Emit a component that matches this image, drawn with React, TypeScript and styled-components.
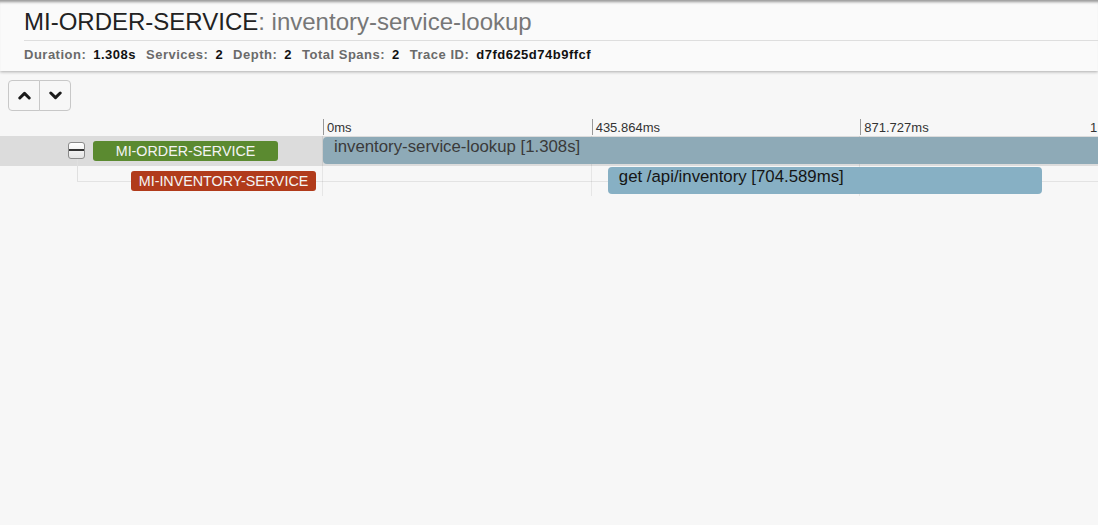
import React from "react";
import styled, { createGlobalStyle } from "styled-components";

const GlobalStyle = createGlobalStyle`
  html, body { margin: 0; padding: 0; overflow: hidden; background: #f7f7f7; }
  body { font-family: "Liberation Sans", Arial, sans-serif; color: #333; }
`;

const TOTAL = 1308;
const LABEL_W = 322;
const TL_W = 806;

const Page = styled.div`
  width: 1098px;
  height: 525px;
  overflow: hidden;
  background: #f7f7f7;
`;

const Header = styled.header`
  position: relative;
  z-index: 1;
  height: 71px;
  background: #fafafa;
  box-shadow: inset 0 4px 3px -2px rgba(0, 0, 0, 0.4), 0 1px 3px rgba(0, 0, 0, 0.3);
`;

const TitleLine = styled.h1`
  margin: 0 0 0 24px;
  padding: 7px 0 2px;
  height: 31px;
  font-size: 24px;
  line-height: 30px;
  font-weight: normal;
  color: #222;
  border-bottom: 1px solid #dedede;
  white-space: nowrap;
`;

const SpanName = styled.span`
  color: #777;
`;

const Stats = styled.div`
  display: flex;
  gap: 10px;
  margin-left: 24px;
  height: 30px;
  line-height: 28px;
  font-size: 13px;
  letter-spacing: 0.5px;
  font-weight: bold;
  white-space: nowrap;
`;

const Stat = styled.span`
  display: flex;
  gap: 7px;
  color: #6a6a6a;
`;

const StatValue = styled.span`
  color: #111;
`;

const Toolbar = styled.div`
  display: flex;
  padding: 9px 0 0 8px;
  height: 31px;
`;

const NavButton = styled.button`
  width: 32px;
  height: 31px;
  display: flex;
  align-items: center;
  justify-content: center;
  background: #f7f7f7;
  border: 1px solid #c8c8c8;
  color: #1a1a1a;
  padding: 0;
  &:first-child { border-radius: 4px 0 0 4px; }
  &:last-child { border-radius: 0 4px 4px 0; margin-left: -1px; }
`;

const Chevron = ({ down }: { down?: boolean }) => (
  <svg width="13" height="9" viewBox="0 0 13 9" aria-hidden="true">
    <polyline
      points={down ? "1.8,2 6.5,6.6 11.2,2" : "1.8,7 6.5,2.4 11.2,7"}
      fill="none"
      stroke="currentColor"
      strokeWidth="3"
      strokeLinecap="round"
      strokeLinejoin="round"
    />
  </svg>
);

const Ticks = styled.div`
  display: flex;
  margin: 8px 0 0 ${LABEL_W + 1}px;
  width: ${TL_W}px;
  height: 16px;
`;

const Tick = styled.div`
  flex: 0 0 33.3333%;
  box-sizing: border-box;
  border-left: 1px solid #999;
  padding-left: 3px;
  font-size: 13px;
  line-height: 18px;
  color: #333;
`;

const EndTick = styled.div`
  flex: 0 0 60px;
  margin-left: -60px;
  text-align: right;
  font-size: 13px;
  line-height: 18px;
  color: #333;
`;

const Rows = styled.div`
  width: ${LABEL_W + TL_W}px;
  margin-top: 1px;
`;

const Row = styled.div<{ $selected?: boolean; $child?: boolean }>`
  position: relative;
  display: grid;
  grid-template-columns: ${LABEL_W}px ${TL_W}px;
  height: 30px;
  background: ${(p) =>
    p.$selected
      ? "#dcdcdc"
      : p.$child
      ? "linear-gradient(#e3e3e3, #e3e3e3) 77px 15px / 100% 1px no-repeat"
      : "transparent"};
  ${(p) =>
    p.$child &&
    `&::before {
      content: "";
      position: absolute;
      left: 77px;
      top: -7px;
      height: 22px;
      border-left: 1px solid #e0e0e0;
    }`}
`;

const LabelCell = styled.div<{ $depth: number }>`
  display: flex;
  align-items: center;
  gap: 8px;
  padding-left: ${(p) => 30 + p.$depth * 38}px;
`;

const Toggle = styled.span<{ $hidden?: boolean }>`
  position: relative;
  flex: 0 0 17px;
  height: 17px;
  box-sizing: border-box;
  border: 1px solid #8a8a8a;
  border-radius: 3px;
  background: linear-gradient(#ffffff, #e4e4e4);
  visibility: ${(p) => (p.$hidden ? "hidden" : "visible")};
  margin-top: -1px;
  &::after {
    content: "";
    position: absolute;
    left: 0;
    right: 0;
    top: 6px;
    height: 2px;
    background: #333;
  }
`;

const Badge = styled.span<{ $color: string }>`
  width: 185px;
  height: 20px;
  border-radius: 3px;
  background: ${(p) => p.$color};
  color: #f4f4f4;
  font-size: 14.3px;
  line-height: 20px;
  text-align: center;
  white-space: nowrap;
`;

const TimelineCell = styled.div`
  display: flex;
  align-items: flex-start;
  background: repeating-linear-gradient(
    to right,
    rgba(0, 0, 0, 0.07) 0 1px,
    transparent 1px 268.667px
  );
`;

const Bar = styled.div<{ $color: string; $text: string }>`
  box-sizing: border-box;
  height: 27px;
  margin-top: 1px;
  border-radius: 4px;
  background: ${(p) => p.$color};
  color: ${(p) => p.$text};
  font-size: 16.8px;
  line-height: 20px;
  padding-left: 11px;
  white-space: nowrap;
  overflow: hidden;
`;

type SpanRow = {
  service: string;
  color: string;
  name: string;
  durLabel: string;
  start: number;
  dur: number;
  depth: number;
  hasChildren: boolean;
  selected: boolean;
  barColor: string;
  textColor: string;
};

const spans: SpanRow[] = [
  {
    service: "MI-ORDER-SERVICE",
    color: "#5b8a30",
    name: "inventory-service-lookup",
    durLabel: "1.308s",
    start: 0,
    dur: 1308,
    depth: 1,
    hasChildren: true,
    selected: true,
    barColor: "#8eaab7",
    textColor: "#3a3a3a",
  },
  {
    service: "MI-INVENTORY-SERVICE",
    color: "#b13b1b",
    name: "get /api/inventory",
    durLabel: "704.589ms",
    start: 462.3,
    dur: 704.589,
    depth: 2,
    hasChildren: false,
    selected: false,
    barColor: "#87b0c4",
    textColor: "#151515",
  },
];

const stats: [string, string][] = [
  ["Duration:", "1.308s"],
  ["Services:", "2"],
  ["Depth:", "2"],
  ["Total Spans:", "2"],
  ["Trace ID:", "d7fd625d74b9ffcf"],
];

export default function App() {
  return (
    <Page>
      <GlobalStyle />
      <Header>
        <TitleLine>
          MI-ORDER-SERVICE<SpanName>: inventory-service-lookup</SpanName>
        </TitleLine>
        <Stats>
          {stats.map(([k, v]) => (
            <Stat key={k}>
              <span>{k}</span>
              <StatValue>{v}</StatValue>
            </Stat>
          ))}
        </Stats>
      </Header>
      <Toolbar>
        <NavButton aria-label="previous">
          <Chevron />
        </NavButton>
        <NavButton aria-label="next">
          <Chevron down />
        </NavButton>
      </Toolbar>
      <Ticks>
        <Tick>0ms</Tick>
        <Tick>435.864ms</Tick>
        <Tick>871.727ms</Tick>
        <EndTick>1.308s</EndTick>
      </Ticks>
      <Rows>
        {spans.map((s) => (
          <Row key={s.name} $selected={s.selected} $child={s.depth > 1}>
            <LabelCell $depth={s.depth}>
              <Toggle $hidden={!s.hasChildren} />
              <Badge $color={s.color}>{s.service}</Badge>
            </LabelCell>
            <TimelineCell>
              <Bar
                $color={s.barColor}
                $text={s.textColor}
                style={{
                  marginLeft: `calc(${(s.start / TOTAL) * 100}% + 1px)`,
                  width: `${(s.dur / TOTAL) * 100}%`,
                }}
              >
                {s.name} [{s.durLabel}]
              </Bar>
            </TimelineCell>
          </Row>
        ))}
      </Rows>
    </Page>
  );
}
